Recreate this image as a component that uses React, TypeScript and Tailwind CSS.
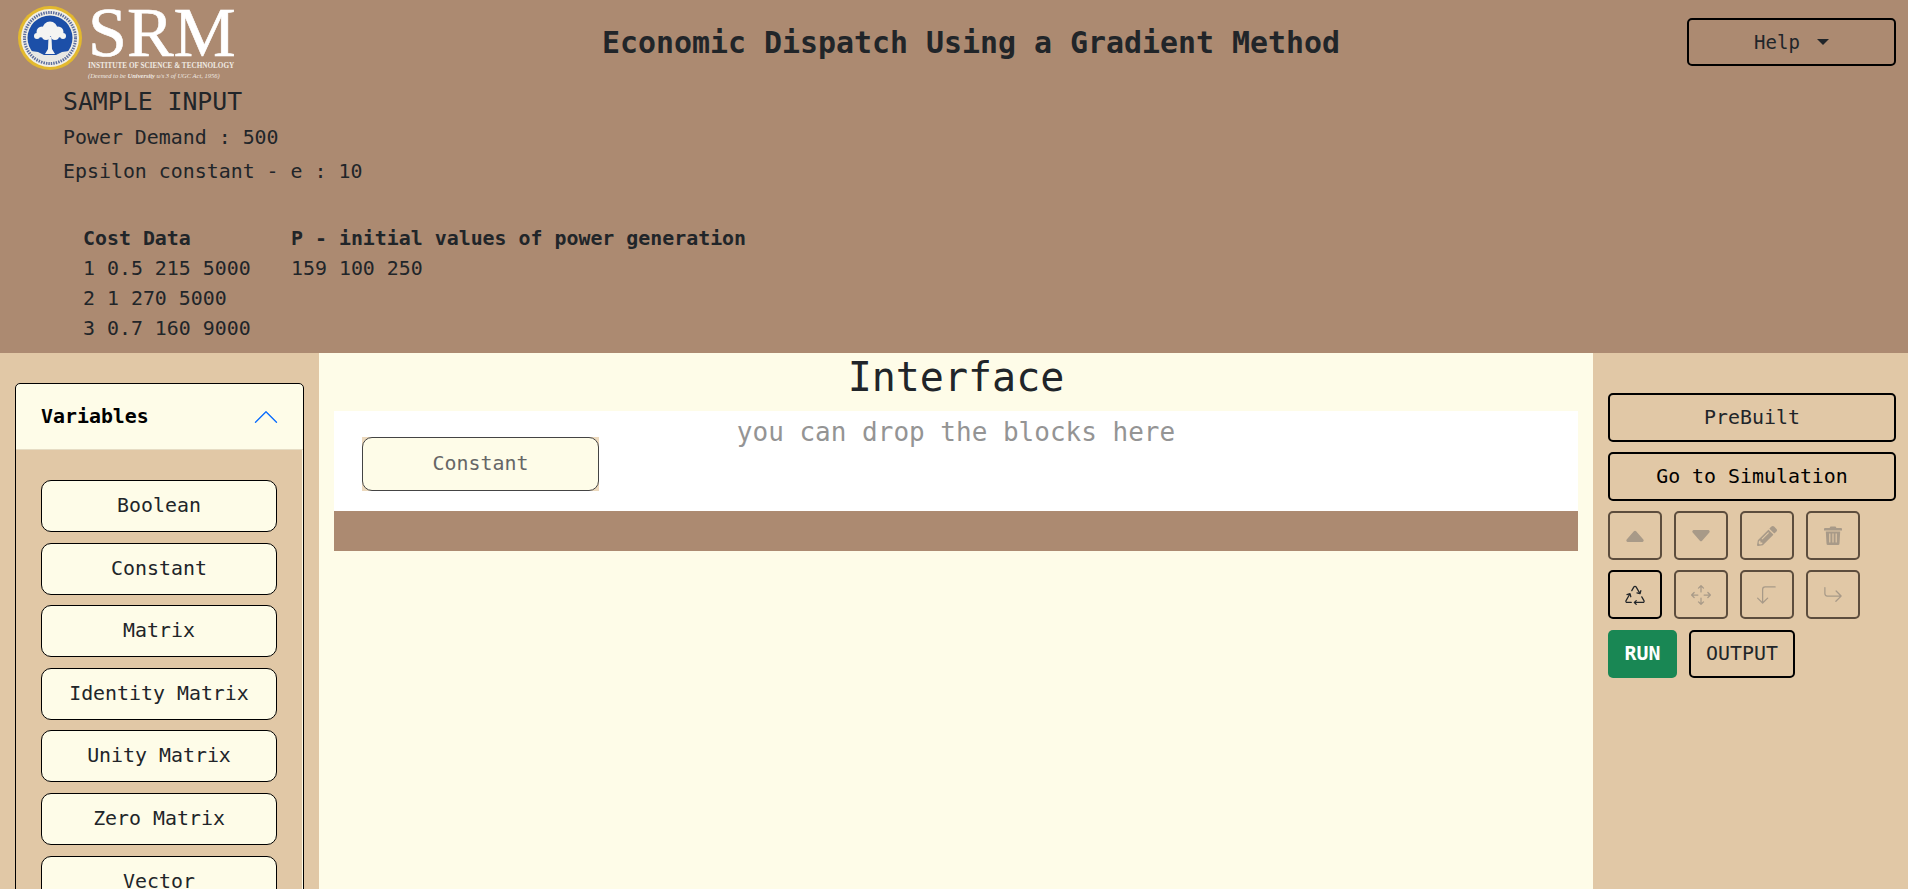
import { ChevronUp } from "lucide-react";
import {
  BsArrow90DegDown,
  BsArrowReturnRight,
  BsArrowsMove,
  BsCaretDownFill,
  BsCaretUpFill,
  BsRecycle,
} from "react-icons/bs";
import { FaPencilAlt } from "react-icons/fa";

const mono = "font-['DejaVu_Sans_Mono','Liberation_Mono',monospace]";

const variables = ["Boolean", "Constant", "Matrix", "Identity Matrix", "Unity Matrix", "Zero Matrix", "Vector"];

const costRows = [
  ["1 0.5 215 5000", "159 100 250"],
  ["2 1 270 5000", ""],
  ["3 0.7 160 9000", ""],
];

function Seal() {
  return (
    <svg width="66" height="66" viewBox="0 0 66 66" className="shrink-0">
      <circle cx="33" cy="33" r="32" fill="#e3b92e" />
      <circle cx="33" cy="33" r="29" fill="#f1efe6" />
      <circle cx="33" cy="33" r="25.5" fill="none" stroke="#5d6f9f" strokeWidth="3" strokeDasharray="1.5 1" />
      <circle cx="33" cy="33" r="22.5" fill="#1c4fa8" />
      <path d="M14 46 A22.5 22.5 0 0 0 52 46 L45 47 L39 50 L27 50 L21 47 Z" fill="#e8e8e4" />
      <g fill="#f4f4f2">
        <circle cx="33" cy="24" r="7.5" />
        <circle cx="25" cy="27" r="5.5" />
        <circle cx="41" cy="27" r="5.5" />
        <circle cx="20" cy="31" r="3" />
        <circle cx="46" cy="31" r="3" />
        <circle cx="29" cy="31" r="4" />
        <circle cx="38" cy="31" r="4" />
        <path d="M31.5 32 L34.5 32 L35 44 L38 49 L28 49 L31 44 Z" />
      </g>
    </svg>
  );
}

function TrashIcon() {
  return (
    <svg width="18" height="19" viewBox="0 0 18 19" fill="currentColor">
      <path d="M6.5 0.5 H11.5 L12.5 2 H17 A1 1 0 0 1 18 3 V4.5 H0 V3 A1 1 0 0 1 1 2 H5.5 Z" />
      <path fillRule="evenodd" d="M1.8 5.5 H16.2 L15.5 17.5 A1.5 1.5 0 0 1 14 19 H4 A1.5 1.5 0 0 1 2.5 17.5 Z M5.2 7.5 V16.5 H6.4 V7.5 Z M8.4 7.5 V16.5 H9.6 V7.5 Z M11.6 7.5 V16.5 H12.8 V7.5 Z" />
    </svg>
  );
}

function Logo() {
  return (
    <div className="flex items-start pl-[17px] pt-[5px] w-[255px] self-start shrink-0">
      <Seal />
      <div className="ml-[5px] font-['Liberation_Serif',serif] text-white w-[165px] pt-[1px]">
        <div className="text-[70px] leading-[54px] h-[54px] [-webkit-text-stroke:0.6px_white]">SRM</div>
        <div className="text-[7.2px] font-bold leading-[9px] mt-[2px] whitespace-nowrap text-[#efe9e2]">INSTITUTE OF SCIENCE &amp; TECHNOLOGY</div>
        <div className="text-[6.5px] italic leading-[9px] whitespace-nowrap text-[#efe9e2]">
          (Deemed to be <b>University</b> u/s 3 of UGC Act, 1956)
        </div>
      </div>
    </div>
  );
}

function IconButton({ children, active = false }: { children: React.ReactNode; active?: boolean }) {
  return (
    <button
      className={`w-[54px] h-[49px] rounded-[5px] border-2 flex items-center justify-center ${
        active ? "border-black text-[#212529]" : "border-[#5c4d3d] text-[#a89a88]"
      }`}
    >
      {children}
    </button>
  );
}

export default function App() {
  return (
    <div className={`${mono} h-[889px] w-full overflow-hidden flex flex-col text-[#212529] bg-[#e1c8a6] text-[19.9px]`}>
      <header className="h-[353px] shrink-0 bg-[#ac8a71]">
        <div className="flex h-[87px] items-start">
          <Logo />
          <h1 className="flex-1 text-center text-[29.9px] font-bold leading-[36px] mt-[25px] whitespace-nowrap">
            Economic Dispatch Using a Gradient Method
          </h1>
          <button className="w-[209px] h-[48px] mr-[12px] mt-[18px] rounded-[5px] border-2 border-black flex items-center justify-center gap-[17px] text-[19px]">
            Help
            <span className="w-0 h-0 border-x-[6.5px] border-x-transparent border-t-[6.5px] border-t-[#212529]" />
          </button>
        </div>
        <div className="pl-[63px]">
          <h4 className="text-[24.8px] leading-[30px] mb-[6px]">SAMPLE INPUT</h4>
          <p className="leading-[30px] mb-[4px]">Power Demand : 500</p>
          <p className="leading-[30px] mb-[37px]">Epsilon constant - e : 10</p>
          <div className="grid grid-cols-[208px_1fr] pl-[20px] leading-[30px]">
            <b>Cost Data</b>
            <b>P - initial values of power generation</b>
            {costRows.map((row) => (
              <div key={row[0]} className="contents">
                <span>{row[0]}</span>
                <span>{row[1]}</span>
              </div>
            ))}
          </div>
        </div>
      </header>

      <div className="flex flex-1 min-h-0">
        <aside className="w-[319px] shrink-0 pl-[15px] pr-[15px] pt-[30px] overflow-hidden">
          <div className="border border-black rounded-[5px] overflow-hidden bg-[#fefce8]">
            <div className="h-[66px] flex items-center justify-between pl-[25px] pr-[16px] border-b border-[#e6dcc4]">
              <span className="font-bold text-black">Variables</span>
              <ChevronUp size={42} strokeWidth={0.8} className="text-[#0d6efd]" />
            </div>
            <div className="bg-[#e1c8a6] mr-[1px] pl-[25px] pr-[25px] pt-[30px] flex flex-col gap-[10.6px] pb-[20px]">
              {variables.map((v) => (
                <button key={v} className="h-[52px] shrink-0 w-full rounded-[10px] border border-black bg-[#fefce8] whitespace-nowrap">
                  {v}
                </button>
              ))}
            </div>
          </div>
        </aside>

        <main className="flex-1 bg-[#fefce8] px-[15px]">
          <h2 className="text-center text-[40px] leading-[48px] mb-[10px]">Interface</h2>
          <div className="h-[100px] bg-white relative">
            <p className="text-center text-[26px] leading-[32px] pt-[5px] text-[#949494]">you can drop the blocks here</p>
            <div className="absolute left-[28px] top-[26px] w-[237px] h-[54px] bg-[#ecd9bd]">
              <div className="w-full h-full rounded-[10px] border border-[#444] bg-[#fefce8] flex items-center justify-center text-[#666]">
                Constant
              </div>
            </div>
          </div>
          <div className="h-[40px] bg-[#ac8a71]" />
        </main>

        <aside className="w-[315px] shrink-0 pl-[15px] pr-[12px] pt-[40px] flex flex-col gap-[10px] overflow-hidden">
          <button className="h-[49px] rounded-[5px] border-2 border-black">PreBuilt</button>
          <button className="h-[49px] rounded-[5px] border-2 border-black text-black">Go to Simulation</button>
          <div className="flex gap-[12px]">
            <IconButton><BsCaretUpFill size={24} /></IconButton>
            <IconButton><BsCaretDownFill size={24} /></IconButton>
            <IconButton><FaPencilAlt size={20} /></IconButton>
            <IconButton><TrashIcon /></IconButton>
          </div>
          <div className="flex gap-[12px]">
            <IconButton active><BsRecycle size={20} /></IconButton>
            <IconButton><BsArrowsMove size={20} /></IconButton>
            <IconButton><BsArrow90DegDown size={20} /></IconButton>
            <IconButton><BsArrowReturnRight size={20} /></IconButton>
          </div>
          <div className="flex gap-[12px] mt-[1px]">
            <button className="w-[69px] h-[48px] rounded-[5px] bg-[#198754] text-white font-bold">RUN</button>
            <button className="w-[106px] h-[48px] rounded-[5px] border-2 border-black">OUTPUT</button>
          </div>
        </aside>
      </div>
    </div>
  );
}
